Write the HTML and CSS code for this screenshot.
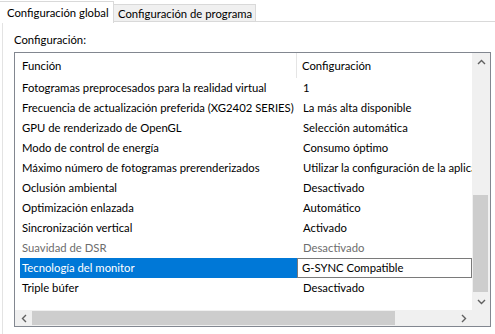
FILE: index.html
```html
<!DOCTYPE html>
<html lang="es">
<head>
  <meta charset="UTF-8">
  <title>Configuración 3D</title>
  <link rel="stylesheet" href="styles.css">
</head>
<body>

<div class="tabs">
  <div class="tab tab-active">Configuración global</div>
  <div class="tab">Configuración de programa</div>
  <div class="tabs-rest"></div>
</div>

<div class="panel">
  <div class="panel-label">Configuración:</div>

  <div class="listbox">
    <div class="list-content">
      <div class="list-header">
        <div class="col-1">Función</div>
        <div class="col-2">Configuración</div>
      </div>
      <div class="row"><div class="col-1">Fotogramas preprocesados para la realidad virtual</div><div class="col-2">1</div></div>
      <div class="row"><div class="col-1">Frecuencia de actualización preferida (XG2402 SERIES)</div><div class="col-2">La más alta disponible</div></div>
      <div class="row"><div class="col-1">GPU de renderizado de OpenGL</div><div class="col-2">Selección automática</div></div>
      <div class="row"><div class="col-1">Modo de control de energía</div><div class="col-2">Consumo óptimo</div></div>
      <div class="row"><div class="col-1">Máximo número de fotogramas prerenderizados</div><div class="col-2">Utilizar la configuración de la aplicación 3D</div></div>
      <div class="row"><div class="col-1">Oclusión ambiental</div><div class="col-2">Desactivado</div></div>
      <div class="row"><div class="col-1">Optimización enlazada</div><div class="col-2">Automático</div></div>
      <div class="row"><div class="col-1">Sincronización vertical</div><div class="col-2">Activado</div></div>
      <div class="row row-disabled"><div class="col-1">Suavidad de DSR</div><div class="col-2">Desactivado</div></div>
      <div class="row row-selected"><div class="col-1">Tecnología del monitor</div><div class="col-2">G-SYNC Compatible</div></div>
      <div class="row"><div class="col-1">Triple búfer</div><div class="col-2">Desactivado</div></div>
    </div>

    <div class="vscroll">
      <div class="arrow">
        <svg width="9" height="6" viewBox="0 0 9 6"><polyline points="1,5 4.5,1.5 8,5" fill="none" stroke="#606060" stroke-width="1.4"/></svg>
      </div>
      <div class="vtrack"><div class="vthumb"></div></div>
      <div class="arrow">
        <svg width="9" height="6" viewBox="0 0 9 6"><polyline points="1,1 4.5,4.5 8,1" fill="none" stroke="#606060" stroke-width="1.4"/></svg>
      </div>
    </div>

    <div class="hscroll">
      <div class="arrow-h">
        <svg width="6" height="9" viewBox="0 0 6 9"><polyline points="5,1 1.5,4.5 5,8" fill="none" stroke="#606060" stroke-width="1.4"/></svg>
      </div>
      <div class="htrack"><div class="hthumb"></div></div>
      <div class="arrow-h">
        <svg width="6" height="9" viewBox="0 0 6 9"><polyline points="1,1 4.5,4.5 1,8" fill="none" stroke="#606060" stroke-width="1.4"/></svg>
      </div>
    </div>
    <div class="corner"></div>
  </div>
</div>

</body>
</html>
```

FILE: styles.css
```css
body {
  margin: 0;
  background: #fff;
  font-family: Lato, "Noto Sans", sans-serif;
  font-size: 11.3px;
  color: #000;
  width: 495px;
  height: 334px;
  overflow: hidden;
}

.tabs {
  display: flex;
  align-items: flex-end;
  height: 22px;
}

.tab {
  height: 18px;
  line-height: 17px;
  padding: 0 2px;
  background: #f0f0f0;
  border: 1px solid #d9d9d9;
  border-bottom: none;
  box-sizing: border-box;
  white-space: nowrap;
}

.tab-active {
  width: 114px;
  height: 22px;
  line-height: 21px;
  padding-left: 7px;
  background: #fff;
  border-left: none;
  margin-bottom: -1px;
  overflow: hidden;
}

.tab + .tab {
  border-left: none;
  padding: 0 3px 0 4px;
  border-bottom: 1px solid #d9d9d9;
}

.tabs-rest {
  flex: 1;
  height: 1px;
  background: #d9d9d9;
}

.panel {
  height: 312px;
  border-left: 1px solid #e3e3e3;
  margin-left: 2px;
  padding: 8px 0 0 11px;
  box-sizing: border-box;
}

.panel-label {
  height: 22px;
  line-height: 20px;
}

.listbox {
  width: 477px;
  height: 275px;
  border: 1px solid #828790;
  box-sizing: border-box;
  display: grid;
  grid-template-columns: 457px 18px;
  grid-template-rows: 257px 16px;
  background: #fff;
}

.list-content {
  overflow: hidden;
}

.list-header {
  display: flex;
  height: 25px;
  line-height: 25px;
}

.list-header .col-1 {
  width: 282px;
  padding-left: 7px;
  border-right: 1px solid #e5e5e5;
  box-sizing: border-box;
}

.list-header .col-2 {
  padding-left: 5px;
}

.row {
  display: flex;
  height: 20px;
  line-height: 19px;
  margin-left: 5px;
  white-space: nowrap;
}

.row .col-1 {
  width: 277px;
  padding-left: 2px;
  box-sizing: border-box;
  overflow: hidden;
}

.row .col-2 {
  flex: 1;
  padding-left: 6px;
  overflow: hidden;
}

.row-disabled {
  color: #6d6d6d;
}

.row-selected .col-1 {
  background: #0078d7;
  color: #fff;
}

.row-selected .col-2 {
  border: 1px solid #7a7a7a;
  padding-left: 4px;
  line-height: 17px;
}

.vscroll {
  display: flex;
  flex-direction: column;
  background: #f0f0f0;
}

.arrow {
  height: 17px;
  display: flex;
  align-items: center;
  justify-content: center;
}

.vtrack {
  flex: 1;
  padding-top: 125px;
  padding-bottom: 1px;
  display: flex;
  flex-direction: column;
}

.vthumb {
  flex: 1;
  margin: 0 2px 0 1px;
  background: #cdcdcd;
}

.hscroll {
  display: flex;
  background: #f0f0f0;
}

.arrow-h {
  width: 17px;
  display: flex;
  align-items: center;
  justify-content: center;
}

.htrack {
  flex: 1;
  display: flex;
  padding: 1px 60px 1px 0;
}

.hthumb {
  flex: 1;
  background: #cdcdcd;
}

.corner {
  background: #f0f0f0;
}
```
